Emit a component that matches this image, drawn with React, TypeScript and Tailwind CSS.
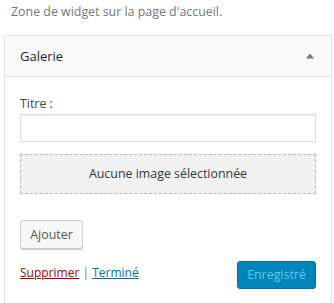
import React from "react";

export default function App() {
  return (
    <div className="w-[334px] h-[303px] bg-white overflow-hidden text-[12.4px] leading-[18px]" style={{ fontFamily: '"Open Sans", "Noto Sans", sans-serif' }}>
      <div className="pl-[11px] pt-[3px] text-[#72777c]">Zone de widget sur la page d'accueil.</div>
      <div className="ml-[4px] mt-[14px] w-[328px] border border-[#e5e5e5] bg-white h-[300px]">
        <div className="h-[41px] bg-[#f9f9f9] border-b border-[#e5e5e5] flex items-center justify-between pl-[15px] pr-[17px]">
          <span className="text-[#23282d] text-[13px] font-medium">Galerie</span>
          <svg width="8" height="6" viewBox="0 0 8 6">
            <path d="M0 5.5 L4 0.5 L8 5.5 Z" fill="#72777c" />
          </svg>
        </div>
        <div className="px-[15px]">
          <div className="mt-[18px] text-[#444]">Titre :</div>
          <div className="mt-[1px] h-[28px] border border-[#ddd] shadow-[inset_0_1px_2px_rgba(0,0,0,0.07)] bg-white" />
          <div className="mt-[12px] h-[40px] border border-dashed border-[#b4b9be] bg-[#f1f1f1] flex items-center justify-center text-[#32373c]">
            Aucune image sélectionnée
          </div>
          <div className="mt-[26px]">
            <button className="h-[29px] w-[63px] border border-[#ccc] rounded-[3px] bg-[#f7f7f7] shadow-[0_1px_0_#ccc] text-[#555]">Ajouter</button>
          </div>
          <div className="mt-[12px] flex items-start justify-between">
            <div className="mt-[3px] text-[12px]">
              <a className="text-[#a00] underline">Supprimer</a>
              <span className="text-[#72777c]"> | </span>
              <a className="text-[#0073aa] underline">Terminé</a>
            </div>
            <button className="h-[28px] w-[79px] rounded-[3px] bg-[#0085ba] border border-[#0073aa] text-[#66c6e4]">Enregistré</button>
          </div>
        </div>
      </div>
    </div>
  );
}
